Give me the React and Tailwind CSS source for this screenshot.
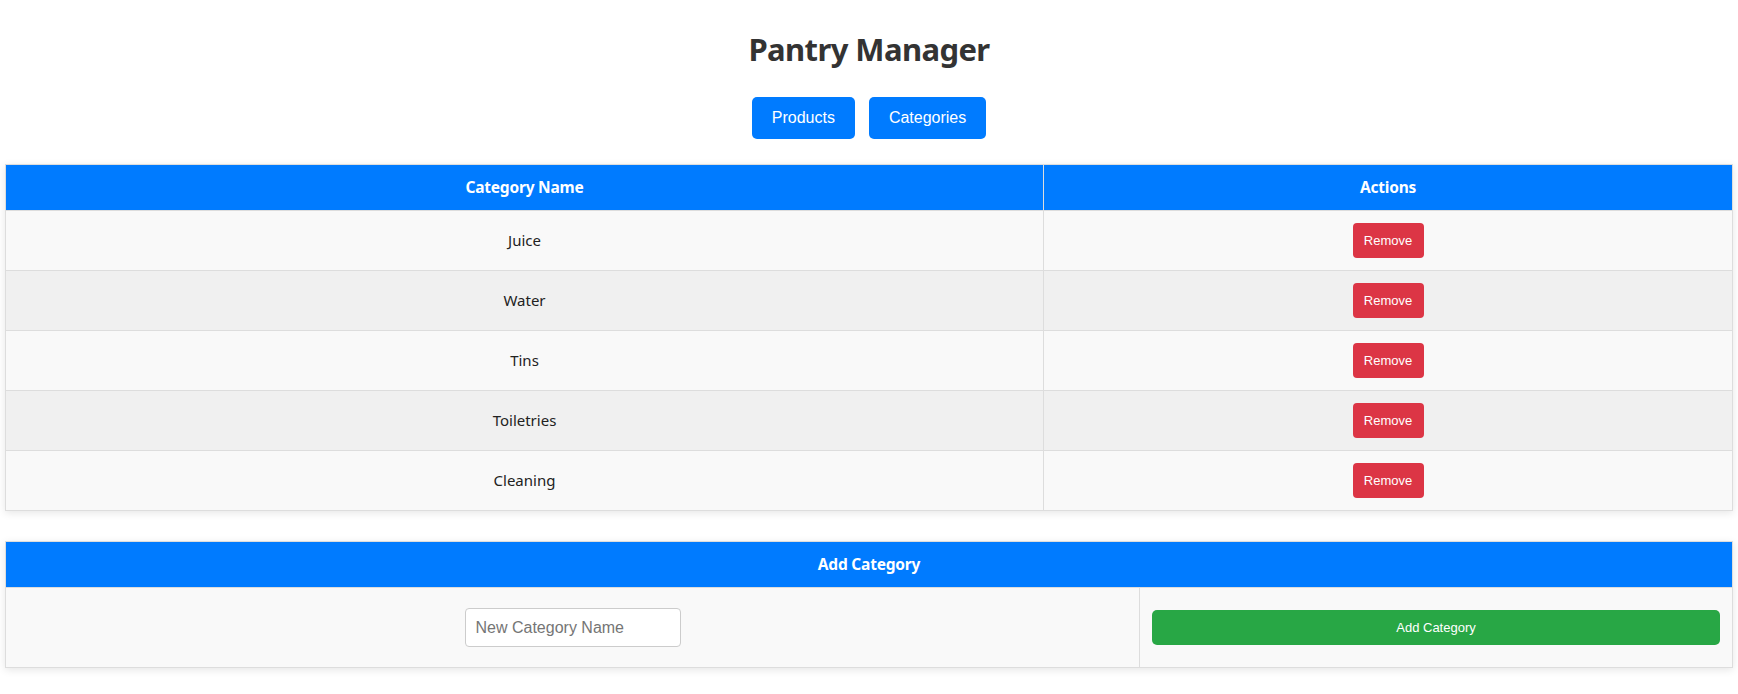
import React, { useState } from "react";

const initialCategories = ["Juice", "Water", "Tins", "Toiletries", "Cleaning"];

const App = () => {
  const [categories, setCategories] = useState(initialCategories);
  const [newName, setNewName] = useState("");

  const removeCategory = (name) => {
    setCategories(categories.filter((c) => c !== name));
  };

  const addCategory = () => {
    if (!newName.trim()) return;
    setCategories([...categories, newName.trim()]);
    setNewName("");
  };

  return (
    <div className="min-h-[694px] bg-white px-[5px] pb-[20px] font-['Noto_Sans',sans-serif] text-[#333]">
      <h1 className="pt-[28px] text-center text-[31px] leading-[42px] font-bold tracking-[-0.6px] text-[#333]">
        Pantry Manager
      </h1>

      {/* Nav buttons */}
      <div className="mt-[27px] flex justify-center gap-[14px] font-['Liberation_Sans',Arial,sans-serif]">
        <button className="h-[42px] rounded-[5px] bg-[#007bff] px-5 text-[16px] text-white">
          Products
        </button>
        <button className="h-[42px] rounded-[5px] bg-[#007bff] px-5 text-[16px] text-white">
          Categories
        </button>
      </div>

      {/* Category list */}
      <div className="mt-[25px] border border-[#ddd] shadow-[0_2px_8px_rgba(0,0,0,0.1)]">
        <div className="grid h-[46px] grid-cols-[1038px_1fr] border-b border-[#ddd] bg-[#007bff] text-[15.5px] font-bold tracking-[-0.2px] text-white">
          <div className="flex items-center justify-center border-r border-[#ddd]">
            Category Name
          </div>
          <div className="flex items-center justify-center">Actions</div>
        </div>
        {categories.map((name, i) => (
          <div
            key={name}
            className={`grid h-[60px] grid-cols-[1038px_1fr] border-[#ddd] text-[15px] text-[#222] last:h-[59px] ${
              i % 2 === 0 ? "bg-[#f9f9f9]" : "bg-[#f0f0f0]"
            } ${i < categories.length - 1 ? "border-b" : ""}`}
          >
            <div className="flex items-center justify-center border-r border-[#ddd]">
              {name}
            </div>
            <div className="flex items-center justify-center">
              <button
                onClick={() => removeCategory(name)}
                className="h-[35px] w-[71px] rounded-[4px] bg-[#dc3545] font-['Liberation_Sans',Arial,sans-serif] text-[13px] text-white"
              >
                Remove
              </button>
            </div>
          </div>
        ))}
      </div>

      {/* Add category */}
      <div className="mt-[30px] border border-[#ddd] shadow-[0_2px_8px_rgba(0,0,0,0.1)]">
        <div className="flex h-[46px] items-center justify-center border-b border-[#ddd] bg-[#007bff] text-[15.5px] font-bold tracking-[-0.2px] text-white">
          Add Category
        </div>
        <div className="grid h-[79px] grid-cols-[1134px_1fr] bg-[#f9f9f9]">
          <div className="flex items-center justify-center border-r border-[#ddd]">
            <input
              value={newName}
              onChange={(e) => setNewName(e.target.value)}
              placeholder="New Category Name"
              className="h-[39px] w-[216px] rounded-[4px] border border-[#ccc] bg-white px-[10px] font-['Liberation_Sans',Arial,sans-serif] text-[16px] text-[#333] outline-none placeholder:text-[#757575]"
            />
          </div>
          <div className="flex items-center px-[12px]">
            <button
              onClick={addCategory}
              className="h-[35px] w-full rounded-[5px] bg-[#28a745] font-['Liberation_Sans',Arial,sans-serif] text-[13px] text-white"
            >
              Add Category
            </button>
          </div>
        </div>
      </div>
    </div>
  );
};

export default App;
